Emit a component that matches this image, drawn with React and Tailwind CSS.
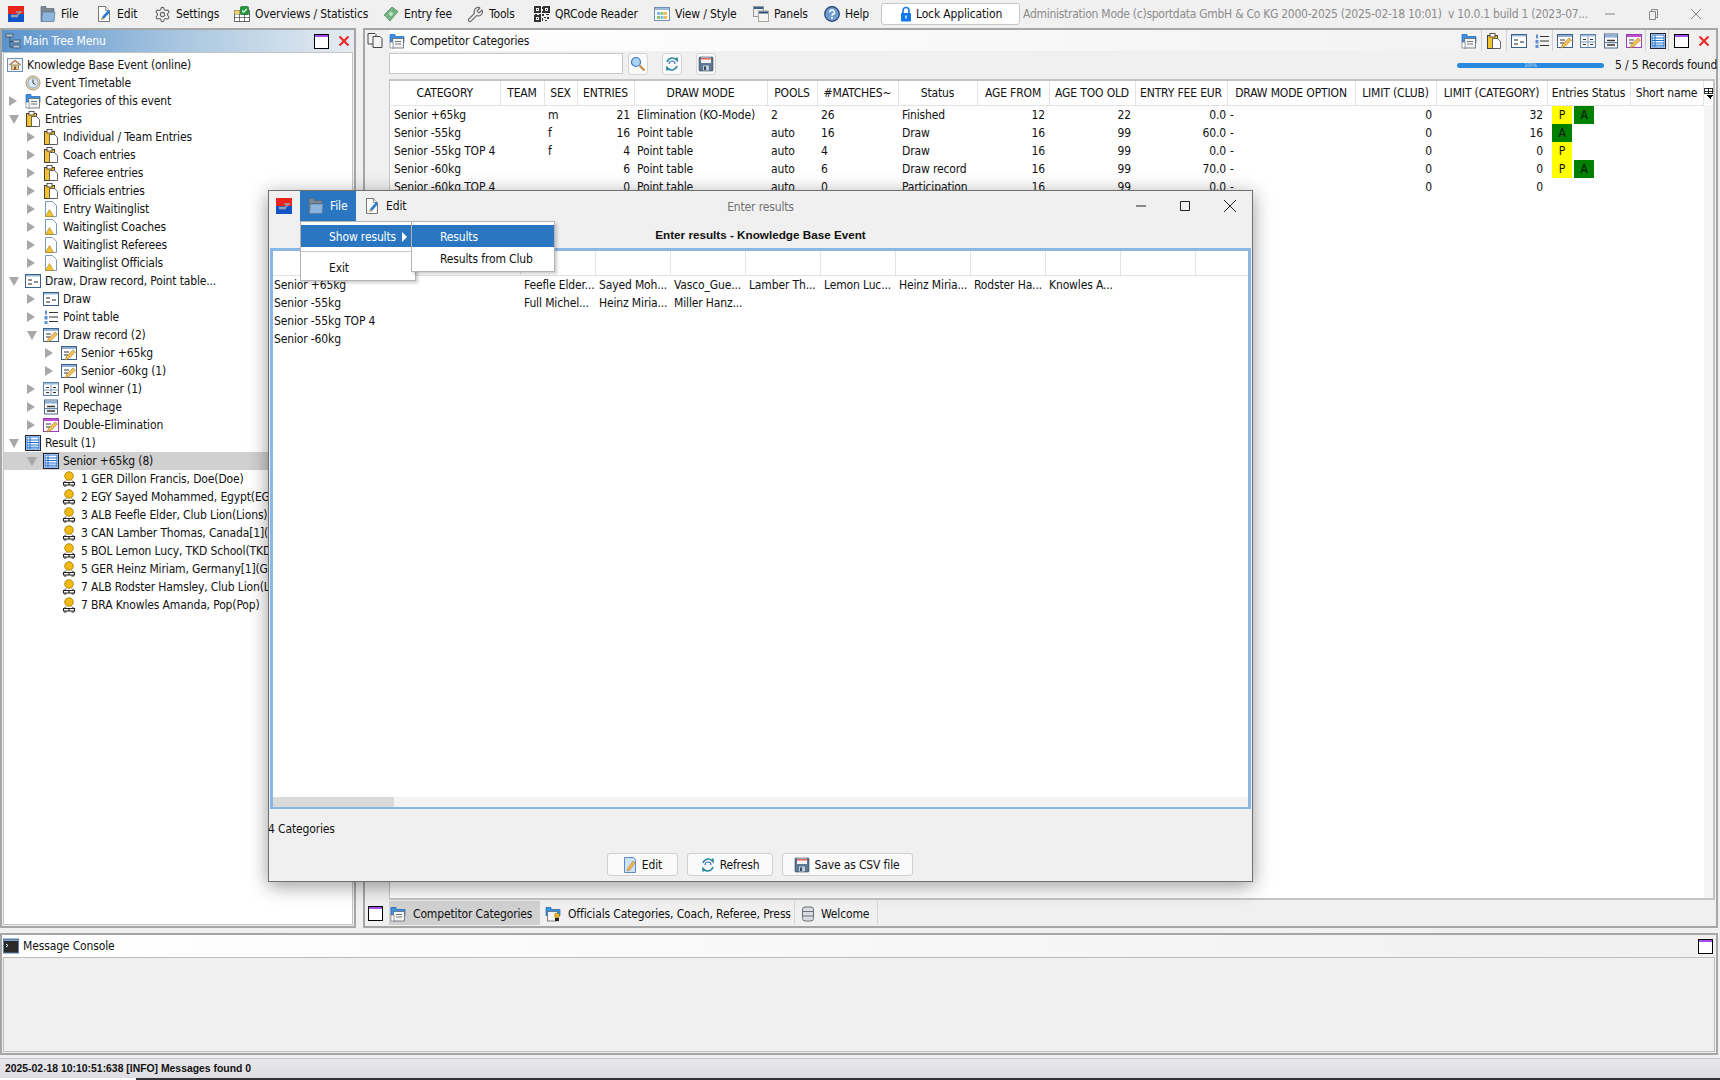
import React from "react";
import { Settings, Wrench } from "lucide-react";

// small 16x16 desktop-style icons
function Ico({ name, className = "w-4 h-4 shrink-0" }) {
    const p = { viewBox: "0 0 16 16", className, xmlns: "http://www.w3.org/2000/svg" };
    switch (name) {
        case "logo":
            return (
                <svg {...p}>
                    <rect width="16" height="8" fill="#e8231c" />
                    <rect y="8" width="16" height="8" fill="#1456c8" />
                    <path d="M3 9.5h6l4-3.5H8M3 10.5h7" stroke="#9aa0a8" strokeWidth="1.4" fill="none" />
                </svg>
            );
        case "folder":
            return (
                <svg {...p}>
                    <path d="M1 .5h5v2h8v3H3v10H1z" fill="#7d8793" stroke="#55606c" strokeWidth=".6" />
                    <path d="M2.500 6H15l-1 9.500H1.500z" fill="#8db4dc" stroke="#5c7894" strokeWidth=".7" />
                </svg>
            );
        case "edit":
            return (
                <svg {...p}>
                    <path d="M2.5 .5h7l4 4v11h-11z" fill="#fff" stroke="#555" strokeWidth=".8" />
                    <path d="M9.5 .5v4h4" fill="#e8e8e8" stroke="#555" strokeWidth=".6" />
                    <path d="M5 14l1-3 6-7 2 2-6 7z" fill="#2f7fd8" />
                    <path d="M5 14l1-3 2 2z" fill="#f3b33d" />
                </svg>
            );
        case "overview":
            return (
                <svg {...p}>
                    <path d="M.5 4.5h15v11H.5z" fill="#fff" stroke="#444" strokeWidth=".8" />
                    <path d="M.5 8h15M.5 11.5h15M5.5 4.5v11M10.5 4.5v11" stroke="#444" strokeWidth=".7" />
                    <rect x=".5" y="4.5" width="5" height="3.5" fill="#f3d35b" />
                    <rect x="6.5" y=".5" width="8" height="8" rx="1" fill="#1f9b3a" stroke="#0d5c20" strokeWidth=".6" />
                    <path d="M8.2 4.5l1.6 1.6 3-3.2" stroke="#fff" strokeWidth="1.2" fill="none" />
                </svg>
            );
        case "money":
            return (
                <svg {...p}>
                    <path d="M1 9l8-8 6 4.5-8 9.5z" fill="#6fb07a" stroke="#4b8a58" strokeWidth=".7" />
                    <circle cx="8" cy="8" r="2" fill="#c8e4cc" />
                    <path d="M2.5 11l7-8M5 13l7.5-8" stroke="#9ccfa6" strokeWidth=".7" />
                </svg>
            );
        case "qr":
            return (
                <svg {...p} shapeRendering="crispEdges">
                    <path d="M1 1h5v5H1zM10 1h5v5h-5zM1 10h5v5H1z" fill="none" stroke="#333" strokeWidth="1.2" />
                    <path d="M3 3h1v1H3zM12 3h1v1h-1zM3 12h1v1H3zM8 1h1v2H8zM7.5 5h1v2h-1zM1 8h2v1H1zM5 8h2v1H5zM8 8h2v2H8zM12 8h3v1h-3zM10 11h2v1h-2zM13 11h2v2h-2zM8 12h1v3H8zM11 14h2v1h-2z" fill="#333" />
                </svg>
            );
        case "view":
            return (
                <svg {...p}>
                    <rect x=".5" y="1.5" width="15" height="13" fill="#fff" stroke="#6d8fb4" />
                    <rect x="1" y="2" width="14" height="2" fill="#9cb9d8" />
                    <rect x="3" y="6" width="3" height="3" fill="#7fb8e8" />
                    <rect x="6.5" y="6" width="3" height="3" fill="#8ac96b" />
                    <rect x="10" y="6" width="3" height="3" fill="#f0bf4f" />
                    <rect x="3" y="10" width="3" height="3" fill="#8ac96b" />
                    <rect x="6.5" y="10" width="3" height="3" fill="#7fb8e8" />
                    <rect x="10" y="10" width="3" height="3" fill="#f0bf4f" />
                </svg>
            );
        case "panels":
            return (
                <svg {...p}>
                    <rect x=".5" y=".5" width="10" height="10" fill="#eee" stroke="#999" />
                    <rect x="1" y="1" width="9" height="2" fill="#3c5f8a" />
                    <rect x="5.5" y="5" width="10" height="10.5" fill="#f4f4f4" stroke="#aaa89a" />
                    <rect x="6" y="5.5" width="9" height="2" fill="#2c4f7a" />
                </svg>
            );
        case "help":
            return (
                <svg {...p}>
                    <circle cx="8" cy="8" r="7.3" fill="#6f9bd0" stroke="#1c3f70" strokeWidth="1.2" />
                    <path d="M5.8 6.2A2.3 2.2 0 1 1 9 8.2c-.7.4-1 .8-1 1.6" fill="none" stroke="#fff" strokeWidth="1.5" />
                    <circle cx="8" cy="12" r="1" fill="#fff" />
                </svg>
            );
        case "lock":
            return (
                <svg {...p}>
                    <path d="M5 7V4.5a3 3 0 0 1 6 0V7" fill="none" stroke="#1f7be8" strokeWidth="1.7" />
                    <rect x="3" y="7" width="10" height="8.5" rx="1" fill="#0f78f0" />
                    <rect x="7.3" y="9.5" width="1.4" height="3" fill="#fff" />
                </svg>
            );
        case "tree":
            return (
                <svg {...p}>
                    <path d="M5 3v11h4M5 8.500h4" fill="none" stroke="#3a4a5c" />
                    <rect x="1" y="1" width="7" height="3" fill="#a8c0d8" stroke="#3a4a5c" strokeWidth=".7" />
                    <rect x="8" y="7" width="7" height="3" fill="#a8c0d8" stroke="#3a4a5c" strokeWidth=".7" />
                    <rect x="8" y="12" width="7" height="3" fill="#a8c0d8" stroke="#3a4a5c" strokeWidth=".7" />
                </svg>
            );
        case "home":
            return (
                <svg {...p}>
                    <rect x=".5" y="1.500" width="15" height="13" fill="#eef3f8" stroke="#6d8fb4" />
                    <path d="M2.500 8L8 3.500 13.500 8" fill="none" stroke="#b0703a" strokeWidth="1.3" />
                    <rect x="4.500" y="8" width="7" height="4.500" fill="#e6c48a" stroke="#7a5a30" strokeWidth=".6" />
                    <rect x="7" y="9.500" width="2" height="3" fill="#7a5a30" />
                </svg>
            );
        case "clock":
            return (
                <svg {...p}>
                    <circle cx="8" cy="8" r="7" fill="#e8d9b8" stroke="#a89670" />
                    <circle cx="8" cy="8" r="5" fill="#dce8f5" stroke="#6d8fb4" strokeWidth=".7" />
                    <path d="M8 4.500V8l2.500 1.500" fill="none" stroke="#333" />
                </svg>
            );
        case "cats":
            return (
                <svg {...p}>
                    <path d="M1 1.500h5v2h9v6H1z" fill="#3a94e8" stroke="#1c5fa8" strokeWidth=".7" />
                    <rect x="3.500" y="5.500" width="11" height="9.500" fill="#f4f4f4" stroke="#5c6670" strokeWidth=".8" />
                    <path d="M6 8.500h6M6 11h6" stroke="#777" />
                    <rect x="1" y="9" width="3" height="6" fill="#fff" stroke="#5c6670" strokeWidth=".6" />
                </svg>
            );
        case "officials":
            return (
                <svg {...p}>
                    <path d="M1 1.500h5v2h9v6H1z" fill="#3a94e8" stroke="#1c5fa8" strokeWidth=".7" />
                    <rect x="2.500" y="5.500" width="10" height="9.500" fill="#f4f4f4" stroke="#5c6670" strokeWidth=".8" />
                    <circle cx="12" cy="9.500" r="2.500" fill="#e8b820" stroke="#7a5a10" strokeWidth=".5" />
                    <rect x="10" y="12" width="4" height="3" fill="#222" />
                </svg>
            );
        case "clip":
            return (
                <svg {...p}>
                    <rect x="1.500" y="2.500" width="10" height="13" fill="#f2c230" stroke="#333" strokeWidth=".9" />
                    <rect x="4" y=".5" width="5" height="3.500" fill="#fff" stroke="#333" strokeWidth=".8" />
                    <path d="M6.500 5.500h5l3 3v7h-8z" fill="#fff" stroke="#444" strokeWidth=".8" />
                </svg>
            );
        case "wait":
            return (
                <svg {...p}>
                    <path d="M2.500 .5h7l4 4v11h-11z" fill="#fff" stroke="#6d8fb4" strokeWidth=".9" />
                    <path d="M2.500 15.500l4-7 4 7z" fill="#f2c230" stroke="#a87f10" strokeWidth=".6" />
                </svg>
            );
        case "draw":
            return (
                <svg {...p}>
                    <rect x=".5" y="1.500" width="15" height="13" fill="#fff" stroke="#3a5f8a" />
                    <rect x="1" y="2" width="14" height="1.500" fill="#9cb9d8" />
                    <path d="M3 7h4M3 11h4M9 9h4" stroke="#222" strokeWidth="1.200" />
                </svg>
            );
        case "point":
            return (
                <svg {...p}>
                    <path d="M6 3.500h9M6 8h9M6 12.500h9" stroke="#333" strokeWidth="1.100" />
                    <path d="M2 1.500h2v4H2zM1.500 7h3v3.500h-3zM1.500 12h3v3h-3z" fill="#5b8fd8" />
                </svg>
            );
        case "record":
        case "double":
            return (
                <svg {...p}>
                    <rect x=".5" y="1.500" width="15" height="13" fill="#fff" stroke={name === "double" ? "#9a3fb0" : "#3a5f8a"} />
                    <rect x="1" y="2" width="14" height="2" fill={name === "double" ? "#c04fd0" : "#8fb0d4"} />
                    <path d="M3 7h5M3 10h4" stroke="#333" />
                    <path d="M4 15l1.500-3.500 6.500-6.500 2.500 2-6.500 6.500z" fill="#f1c25b" stroke="#a8741c" strokeWidth=".6" />
                </svg>
            );
        case "pool":
            return (
                <svg {...p}>
                    <rect x=".5" y="1.500" width="15" height="13" fill="#fff" stroke="#5d82ab" />
                    <rect x="1" y="2" width="14" height="1.500" fill="#9cb9d8" />
                    <path d="M8 3.500v11M1 9h14" stroke="#7d97b4" />
                    <path d="M3 6.500h3M10 6.500h3M3 11.500h3M10 11.500h3" stroke="#333" />
                </svg>
            );
        case "repechage":
            return (
                <svg {...p}>
                    <rect x="1.500" y="1" width="13" height="14" fill="#fff" stroke="#4a6a90" />
                    <rect x="2" y="1.500" width="12" height="3" fill="#8fb0d4" />
                    <path d="M4 7.500h8M4 12h8" stroke="#333" strokeWidth="1.500" />
                    <path d="M2 9.700h12" stroke="#4a6a90" />
                </svg>
            );
        case "result":
            return (
                <svg {...p}>
                    <rect x=".5" y=".5" width="15" height="15" fill="#fff" stroke="#223" />
                    <rect x="2" y="2" width="12" height="12" fill="#fff" stroke="#1f6fd0" />
                    <path d="M2 5h12M2 7.500h12M2 10h12M2 12.200h12" stroke="#1f6fd0" />
                    <path d="M5 2v12" stroke="#1f6fd0" />
                </svg>
            );
        case "medal":
            return (
                <svg {...p}>
                    <circle cx="8" cy="5" r="4.300" fill="#f2b90f" stroke="#a67a08" strokeWidth=".8" />
                    <path d="M2.500 11.500h11v2.500h-11z" fill="#fff" stroke="#222" strokeWidth="1.100" />
                    <path d="M5 9.500l-2 2M11 9.500l2 2" stroke="#222" />
                    <path d="M3 15h2.500M10.500 15H13M8 12v2" stroke="#222" strokeWidth="1.200" />
                </svg>
            );
        case "window":
            return (
                <svg {...p} shapeRendering="crispEdges">
                    <rect x="1" y="1.500" width="14" height="13" fill="#fff" stroke="#000" />
                    <rect x="1.500" y="2" width="13" height="2" fill="#a24fe8" />
                </svg>
            );
        case "redx":
            return (
                <svg {...p}>
                    <path d="M3.500 3.500l9 9M12.500 3.500l-9 9" stroke="#ee2b2b" strokeWidth="2.200" />
                </svg>
            );
        case "copy":
            return (
                <svg {...p}>
                    <path d="M1 1.500h7l1 1v9.500H1z" fill="#f4f4f4" stroke="#333" strokeWidth=".9" />
                    <path d="M6 4.500h7l2 2v9H6z" fill="#f4f4f4" stroke="#333" strokeWidth=".9" />
                </svg>
            );
        case "search":
            return (
                <svg {...p}>
                    <circle cx="6" cy="6" r="4.500" fill="#a8d4f5" stroke="#3f78b8" strokeWidth="1.200" />
                    <path d="M9.500 9.500l5 5" stroke="#c08a3a" strokeWidth="2.200" />
                </svg>
            );
        case "refresh":
            return (
                <svg {...p}>
                    <path d="M3 6a5.500 5.500 0 0 1 9-2.500l1 1V1.500M13 10a5.500 5.500 0 0 1-9 2.500l-1-1v3" fill="none" stroke="#2a8a9a" strokeWidth="1.700" />
                    <path d="M5 8a3 3 0 0 1 6 0" fill="none" stroke="#3a6fc0" strokeWidth="1.200" />
                </svg>
            );
        case "save":
            return (
                <svg {...p}>
                    <rect x="1" y="1" width="14" height="14" rx="1" fill="#5d7894" stroke="#33475c" strokeWidth=".6" />
                    <rect x="3" y="1.500" width="10" height="5.500" fill="#f3f3f3" />
                    <rect x="3" y="2" width="10" height="1.500" fill="#e0625a" />
                    <rect x="5" y="9.500" width="6" height="5" fill="#c4ccd4" />
                    <rect x="6" y="10.500" width="2" height="3.500" fill="#33475c" />
                </svg>
            );
        case "pencil":
            return (
                <svg {...p}>
                    <path d="M2.500 .5h9l2 2v13h-11z" fill="#cfe3f8" stroke="#4a80c0" strokeWidth=".9" />
                    <path d="M5 14l1-3 5-7 2 2-5 7z" fill="#f1b54a" stroke="#a8741c" strokeWidth=".5" />
                </svg>
            );
        case "db":
            return (
                <svg {...p}>
                    <rect x="2.500" y="1" width="11" height="14" rx="2.500" fill="#d8dce0" stroke="#6a7278" />
                    <path d="M2.500 5.500h11M2.500 10h11" stroke="#6a7278" />
                </svg>
            );
        case "console":
            return (
                <svg {...p}>
                    <rect x=".5" y="1" width="15" height="14" fill="#2a2a2a" stroke="#5a7fa8" />
                    <rect x="1" y="1.500" width="14" height="1.500" fill="#7fa5d0" />
                    <path d="M3 6l2 1.500L3 9" fill="none" stroke="#fff" />
                </svg>
            );
        case "tableDrop":
            return (
                <svg {...p} shapeRendering="crispEdges">
                    <rect x="2" y="1.500" width="10" height="7" fill="#fff" stroke="#000" />
                    <path d="M2 5h10M7 1.500v7" stroke="#000" />
                    <path d="M5 10h8l-4 4.500z" fill="#000" />
                </svg>
            );
        default:
            return null;
    }
}

const sans = "[font-family:'DejaVu_Sans_Condensed','Liberation_Sans',sans-serif]";

const treeRows = [
    { level: 0, icon: "home", label: "Knowledge Base Event (online)" },
    { level: 1, icon: "clock", label: "Event Timetable" },
    { level: 1, arrow: "r", icon: "cats", label: "Categories of this event" },
    { level: 1, arrow: "d", icon: "clip", label: "Entries" },
    { level: 2, arrow: "r", icon: "clip", label: "Individual / Team Entries" },
    { level: 2, arrow: "r", icon: "clip", label: "Coach entries" },
    { level: 2, arrow: "r", icon: "clip", label: "Referee entries" },
    { level: 2, arrow: "r", icon: "clip", label: "Officials entries" },
    { level: 2, arrow: "r", icon: "wait", label: "Entry Waitinglist" },
    { level: 2, arrow: "r", icon: "wait", label: "Waitinglist Coaches" },
    { level: 2, arrow: "r", icon: "wait", label: "Waitinglist Referees" },
    { level: 2, arrow: "r", icon: "wait", label: "Waitinglist Officials" },
    { level: 1, arrow: "d", icon: "draw", label: "Draw, Draw record, Point table..." },
    { level: 2, arrow: "r", icon: "draw", label: "Draw" },
    { level: 2, arrow: "r", icon: "point", label: "Point table" },
    { level: 2, arrow: "d", icon: "record", label: "Draw record (2)" },
    { level: 3, arrow: "r", icon: "record", label: "Senior +65kg" },
    { level: 3, arrow: "r", icon: "record", label: "Senior -60kg (1)" },
    { level: 2, arrow: "r", icon: "pool", label: "Pool winner (1)" },
    { level: 2, arrow: "r", icon: "repechage", label: "Repechage" },
    { level: 2, arrow: "r", icon: "double", label: "Double-Elimination" },
    { level: 1, arrow: "d", icon: "result", label: "Result (1)" },
    { level: 2, arrow: "d", icon: "result", label: "Senior +65kg (8)", selected: true },
    { level: 3, icon: "medal", label: "1 GER Dillon Francis, Doe(Doe)" },
    { level: 3, icon: "medal", label: "2 EGY Sayed Mohammed, Egypt(EGY)" },
    { level: 3, icon: "medal", label: "3 ALB Feefle Elder, Club Lion(Lions)" },
    { level: 3, icon: "medal", label: "3 CAN Lamber Thomas, Canada[1](CAN)" },
    { level: 3, icon: "medal", label: "5 BOL Lemon Lucy, TKD School(TKD)" },
    { level: 3, icon: "medal", label: "5 GER Heinz Miriam, Germany[1](GER)" },
    { level: 3, icon: "medal", label: "7 ALB Rodster Hamsley, Club Lion(Lions)" },
    { level: 3, icon: "medal", label: "7 BRA Knowles Amanda, Pop(Pop)" },
];

const levelPad = ["pl-[3px]", "pl-[3px]", "pl-[21px]", "pl-[39px]"];

const columns = [
    { label: "CATEGORY", w: "w-[110px]" },
    { label: "TEAM", w: "w-[44px]" },
    { label: "SEX", w: "w-[33px]" },
    { label: "ENTRIES", w: "w-[57px]", right: true },
    { label: "DRAW MODE", w: "w-[133px]" },
    { label: "POOLS", w: "w-[50px]" },
    { label: "#MATCHES~", w: "w-[81px]" },
    { label: "Status", w: "w-[79px]" },
    { label: "AGE FROM", w: "w-[72px]", right: true },
    { label: "AGE TOO OLD", w: "w-[86px]", right: true },
    { label: "ENTRY FEE EUR", w: "w-[92px]", right: true },
    { label: "DRAW MODE OPTION", w: "w-[128px]" },
    { label: "LIMIT (CLUB)", w: "w-[81px]", right: true },
    { label: "LIMIT (CATEGORY)", w: "w-[111px]", right: true },
    { label: "Entries Status", w: "w-[83px]" },
    { label: "Short name", w: "w-[73px]" },
];

const categories = [
    ["Senior +65kg", "", "m", "21", "Elimination (KO-Mode)", "2", "26", "Finished", "12", "22", "0.0", "-", "0", "32", "PA", ""],
    ["Senior -55kg", "", "f", "16", "Point table", "auto", "16", "Draw", "16", "99", "60.0", "-", "0", "16", "A", ""],
    ["Senior -55kg TOP 4", "", "f", "4", "Point table", "auto", "4", "Draw", "16", "99", "0.0", "-", "0", "0", "P", ""],
    ["Senior -60kg", "", "", "6", "Point table", "auto", "6", "Draw record", "16", "99", "70.0", "-", "0", "0", "PA", ""],
    ["Senior -60kg TOP 4", "", "", "0", "Point table", "auto", "0", "Participation", "16", "99", "0.0", "-", "0", "0", "", ""],
];

const resultRows = [
    { name: "Senior +65kg", cells: ["Feefle Elder...", "Sayed Moh...", "Vasco_Gue...", "Lamber Th...", "Lemon Luc...", "Heinz Miria...", "Rodster Ha...", "Knowles A..."] },
    { name: "Senior -55kg", cells: ["Full Michel...", "Heinz Miria...", "Miller Hanz..."] },
    { name: "Senior -55kg TOP 4", cells: [] },
    { name: "Senior -60kg", cells: [] },
];

// per-column cell padding, the fee and the dash next to it sit close together
function cellPad(i) {
    if (i === 14) return "pl-[5px] pr-0";
    if (i === 10) return "pl-1 pr-[1px]";
    if (i === 11) return "pl-[3px] pr-0";
    if (i === 4) return "pl-[3px] pr-0";
    return "px-1";
}

function Arrow({ dir }) {
    if (dir === "d") {
        return <span className="w-0 h-0 border-l-[5px] border-r-[5px] border-t-[9px] border-l-transparent border-r-transparent border-t-[#a8a8a8]"></span>;
    }
    return <span className="w-0 h-0 border-t-[5px] border-b-[5px] border-l-[8px] border-t-transparent border-b-transparent border-l-[#a8a8a8]"></span>;
}

function StatusChips({ value }) {
    return (
        <div className="flex gap-[2px] h-[18px]">
            {value.split("").map((c) => (
                <span key={c} className={c === "P" ? "w-[20px] h-[18px] bg-[#ffff00] text-center leading-[18px]" : "w-[20px] h-[18px] bg-[#008000] text-center leading-[18px]"}>{c}</span>
            ))}
        </div>
    );
}

function TopBar() {
    return (
        <div className="h-[28px] flex items-center shrink-0 bg-[#f0f0f0] whitespace-nowrap">
            <div className="w-[40px] pl-[8px] shrink-0"><Ico name="logo" /></div>
            <MenuItem icon="folder" label="File" w="w-[56px]" />
            <MenuItem icon="edit" label="Edit" w="w-[58px]" />
            <MenuItem lucide={Settings} label="Settings" w="w-[80px]" />
            <MenuItem icon="overview" label="Overviews / Statistics" w="w-[149px]" />
            <MenuItem icon="money" label="Entry fee" w="w-[84px]" />
            <MenuItem lucide={Wrench} label="Tools" w="w-[67px]" />
            <MenuItem icon="qr" label="QRCode Reader" w="w-[120px]" />
            <MenuItem icon="view" label="View / Style" w="w-[99px]" />
            <MenuItem icon="panels" label="Panels" w="w-[71px]" />
            <MenuItem icon="help" label="Help" w="w-[57px]" />
            <button className="w-[139px] h-[22px] flex items-center pl-[16px] gap-[2px] bg-white border border-[#c8c8c8] rounded-[3px] shrink-0">
                <Ico name="lock" />
                <span>Lock Application</span>
            </button>
            <span className="ml-[3px] w-[572px] tracking-[-0.27px] text-[#8c8c8c] shrink-0">Administration Mode (c)sportdata GmbH &amp; Co KG 2000-2025 (2025-02-18 10:01)&nbsp; v 10.0.1 build 1 (2023-07...</span>
            <div className="flex items-center ml-[9px] gap-[31px]">
                <svg viewBox="0 0 12 12" className="w-3 h-3"><path d="M1 6h10" stroke="#888" /></svg>
                <svg viewBox="0 0 12 12" className="w-3 h-3"><path d="M2.500 3.500h6v8h-6zM4.500 3.500v-2h6v8h-2" fill="none" stroke="#888" /></svg>
                <svg viewBox="0 0 12 12" className="w-3 h-3"><path d="M1 1l10 10M11 1L1 11" stroke="#888" /></svg>
            </div>
        </div>
    );
}

function MenuItem({ icon, lucide: LucideIcon, label, w }) {
    return (
        <div className={`${w} flex items-center gap-[5px] shrink-0`}>
            {LucideIcon ? <LucideIcon className="w-[17px] h-[17px] text-[#666]" strokeWidth={1.6} /> : <Ico name={icon} />}
            <span>{label}</span>
        </div>
    );
}

function TreePanel() {
    return (
        <div className="w-[356px] shrink-0 flex flex-col border-2 border-[#a6a6a6]">
            <div className="h-[22px] shrink-0 flex items-center pl-[3px] gap-[2px] text-white bg-gradient-to-r from-[#5a93cc] via-[#a8c6e0] to-[#e6ecf2]">
                <Ico name="tree" />
                <span className="flex-1">Main Tree Menu</span>
                <Ico name="window" className="w-[17px] h-[17px] shrink-0 mr-[2px]" />
                <Ico name="redx" className="w-4 h-4 mx-[2px] shrink-0" />
            </div>
            <div className="flex-1 mx-[1px] mb-[1px] pt-[3px] bg-white border border-[#c4c4c4] overflow-hidden">
                {treeRows.map((row) => (
                    <div key={row.label + row.level} className={`h-[18px] flex items-center whitespace-nowrap ${levelPad[row.level]} ${row.selected ? "bg-[#d0d0d0]" : ""}`}>
                        {row.level > 0 && (
                            <span className="w-[18px] pl-[2px] flex shrink-0">{row.arrow && <Arrow dir={row.arrow} />}</span>
                        )}
                        <Ico name={row.icon} />
                        <span className="ml-[4px]">{row.label}</span>
                    </div>
                ))}
            </div>
        </div>
    );
}

function ToolGroup({ icons, pad }) {
    return (
        <div className={`flex items-center gap-[7px] h-[21px] border-r border-[#d0d0d0] ${pad}`}>
            {icons.map((name, i) => <Ico key={i} name={name} />)}
        </div>
    );
}

function CategoriesPanel() {
    return (
        <div className="flex-1 flex border-2 border-[#a6a6a6] mr-[2px] ml-[7px] min-w-0">
            {/* left strip */}
            <div className="w-[24px] shrink-0 flex flex-col justify-between items-start pl-[2px] py-[2px]">
                <Ico name="copy" />
                <Ico name="window" className="w-[17px] h-[17px] shrink-0 mb-[2px]" />
            </div>
            <div className="flex-1 flex flex-col min-w-0">
                <div className="h-[21px] shrink-0 flex items-center bg-gradient-to-r from-white to-[#f0f0f0]">
                    <Ico name="cats" />
                    <span className="ml-[5px] flex-1">Competitor Categories</span>
                    <div className="flex items-center">
                        <ToolGroup icons={["cats"]} pad="px-[4px]" />
                        <ToolGroup icons={["clip"]} pad="px-[4px]" />
                        <ToolGroup icons={["draw", "point"]} pad="pl-[4px] pr-[2px]" />
                        <ToolGroup icons={["record", "pool", "repechage", "double"]} pad="pl-[4px] pr-[3px]" />
                        <ToolGroup icons={["result"]} pad="pl-[4px] pr-[2px]" />
                        <div className="flex items-center gap-[7px] pl-[4px] pr-[4px]">
                            <Ico name="window" />
                            <Ico name="redx" />
                        </div>
                    </div>
                </div>
                <div className="h-[28px] shrink-0 flex items-start pt-[2px]">
                    <input className="w-[234px] h-[21px] bg-white border border-[#c8c8c8]" />
                    <button className="ml-[5px] w-[20px] h-[22px] flex items-center justify-center bg-[#fafafa] border border-[#d4d4d4] rounded-[3px]"><Ico name="search" /></button>
                    <button className="ml-[14px] w-[20px] h-[22px] flex items-center justify-center bg-[#fafafa] border border-[#d4d4d4] rounded-[3px]"><Ico name="refresh" /></button>
                    <button className="ml-[14px] w-[20px] h-[22px] flex items-center justify-center bg-[#fafafa] border border-[#d4d4d4] rounded-[3px]"><Ico name="save" /></button>
                    <div className="ml-auto flex items-center">
                        <div className="w-[147px] h-[5px] mt-[1px] rounded-full bg-[#2a8ae0] flex items-center justify-center text-[5px] leading-none text-[#cfe0f0]">100%</div>
                        <span className="ml-[11px] w-[101px] leading-[24px] whitespace-nowrap">5 / 5 Records found</span>
                    </div>
                </div>
                <div className="flex-1 mr-[1px] flex bg-white border-t-2 border-b-2 border-l border-r-2 border-[#c4c4c4] min-h-0 overflow-hidden">
                    <table className="table-fixed w-[1313px] h-fit border-collapse shrink-0">
                        <thead>
                            <tr className="h-[24px] border-b border-[#e4e4e4]">
                                {columns.map((c) => (
                                    <th key={c.label} className={`${c.w} font-normal text-center border-r border-[#e4e4e4] whitespace-nowrap overflow-hidden p-0`}>{c.label}</th>
                                ))}
                            </tr>
                        </thead>
                        <tbody>
                            {categories.map((row) => (
                                <tr key={row[0]} className="h-[18px]">
                                    {row.map((v, i) => (
                                        <td key={i} className={`${columns[i].right ? "text-right" : "text-left"} ${cellPad(i)} py-0 whitespace-nowrap overflow-hidden`}>
                                            {i === 14 ? <StatusChips value={v} /> : v}
                                        </td>
                                    ))}
                                </tr>
                            ))}
                        </tbody>
                    </table>
                    <div className="flex-1 bg-[#f5f5f5] flex flex-col">
                        <div className="h-[24px] bg-white flex items-center"><Ico name="tableDrop" className="w-[13px] h-[13px] -ml-[1px]" /></div>
                    </div>
                </div>
                <div className="h-[24px] mt-[1px] shrink-0 flex items-stretch mb-[1px] whitespace-nowrap">
                    <div className="w-[151px] flex items-center bg-[#d0d0d0] pl-[1px] pt-[2px] gap-[7px]">
                        <Ico name="cats" /><span>Competitor Categories</span>
                    </div>
                    <div className="w-[255px] flex items-center pl-[5px] pt-[2px] gap-[7px] border-r border-[#d8d8d8]">
                        <Ico name="officials" /><span>Officials Categories, Coach, Referee, Press</span>
                    </div>
                    <div className="w-[83px] flex items-center pl-[5px] pt-[2px] gap-[5px] border-r border-[#d8d8d8]">
                        <Ico name="db" /><span>Welcome</span>
                    </div>
                </div>
            </div>
        </div>
    );
}

function ResultsDialog() {
    const headerCols = Array.from({ length: 9 });
    return (
        <div className="absolute left-[268px] top-[190px] w-[985px] h-[692px] flex flex-col bg-[#f0f0f0] border border-[#707070] shadow-[0_4px_18px_rgba(0,0,0,0.4)]">
            <div className="relative h-[30px] shrink-0 flex items-center">
                <Ico name="logo" className="w-4 h-4 ml-[7px] shrink-0" />
                <div className="ml-[8px] w-[56px] h-[30px] bg-[#2a76c0] text-white flex items-center pl-[8px] gap-[6px]">
                    <Ico name="folder" /><span>File</span>
                </div>
                <div className="ml-[8px] flex items-center gap-[6px]">
                    <Ico name="edit" /><span>Edit</span>
                </div>
                <span className="absolute inset-x-0 pt-[2px] text-center text-[#707070]">Enter results</span>
                <div className="ml-auto flex items-center gap-[32px] pr-[15px]">
                    <svg viewBox="0 0 12 12" className="w-3 h-3"><path d="M1 6h10" stroke="#222" /></svg>
                    <svg viewBox="0 0 12 12" className="w-3 h-3"><path d="M1.500 1.500h9v9h-9z" fill="none" stroke="#222" /></svg>
                    <svg viewBox="0 0 14 14" className="w-[14px] h-[14px]"><path d="M1 1l12 12M13 1L1 13" stroke="#222" /></svg>
                </div>
            </div>
            <div className="h-[27px] shrink-0 flex items-center justify-center pt-[1px] font-bold text-[11.7px] tracking-normal [font-family:'Liberation_Sans',sans-serif]">Enter results - Knowledge Base Event</div>
            <div className="h-[561px] mx-[1px] shrink-0 flex flex-col bg-white border-[3px] border-b-2 border-[#8ab8e6]">
                <div className="h-[25px] shrink-0 flex border-b border-[#e4e4e4]">
                    <div className="w-[248px] border-r border-[#e4e4e4]"></div>
                    {headerCols.map((_, i) => <div key={i} className="w-[75px] shrink-0 border-r border-[#e4e4e4]"></div>)}
                </div>
                <div className="flex-1 whitespace-nowrap">
                    {resultRows.map((r) => (
                        <div key={r.name} className="h-[18px] flex items-center">
                            <div className="w-[248px] shrink-0 pl-[1px]">{r.name}</div>
                            {r.cells.map((c) => <div key={c} className="w-[75px] shrink-0 pl-[3px]">{c}</div>)}
                        </div>
                    ))}
                </div>
                <div className="h-[10px] shrink-0 bg-[#f3f3f3]">
                    <div className="w-[121px] h-[10px] bg-[#dadada]"></div>
                </div>
            </div>
            <div className="h-[21px] mt-[9px] shrink-0 flex items-center -ml-[1px]">4 Categories</div>
            <div className="flex justify-center gap-[9px] mt-[14px] pr-[2px]">
                <button className="w-[71px] h-[23px] flex items-center justify-center gap-[4px] bg-[#fafafa] border border-[#cfcfcf] rounded-[3px]"><Ico name="pencil" />Edit</button>
                <button className="w-[86px] h-[23px] flex items-center justify-center gap-[4px] bg-[#fafafa] border border-[#cfcfcf] rounded-[3px]"><Ico name="refresh" />Refresh</button>
                <button className="w-[131px] h-[23px] flex items-center justify-center gap-[4px] bg-[#fafafa] border border-[#cfcfcf] rounded-[3px]"><Ico name="save" />Save as CSV file</button>
            </div>

            {/* opened File menu */}
            <div className="absolute left-[31px] top-[30px] w-[116px] h-[60px] bg-white border border-[#b4b4b4] shadow-[2px_2px_3px_rgba(0,0,0,0.2)] pt-[3px]">
                <div className="h-[22px] w-[110px] bg-[#2a76c0] text-white flex items-center pl-[28px] pt-[2px] relative">
                    Show results
                    <span className="absolute right-[4px] w-0 h-0 border-t-[5px] border-b-[5px] border-l-[5px] border-t-transparent border-b-transparent border-l-white"></span>
                </div>
                <div className="h-px bg-[#c8c8c8] mt-[4px]"></div>
                <div className="h-[24px] flex items-center pl-[28px] mt-[4px]">Exit</div>
            </div>
            <div className="absolute left-[142px] top-[30px] w-[144px] h-[51px] bg-white border border-[#b4b4b4] shadow-[2px_2px_3px_rgba(0,0,0,0.2)] pt-[3px]">
                <div className="h-[22px] bg-[#2a76c0] text-white flex items-center pl-[28px] pt-[2px]">Results</div>
                <div className="h-[22px] flex items-center pl-[28px] pt-[2px]">Results from Club</div>
            </div>
        </div>
    );
}

export default function App() {
    return (
        <div className={`${sans} relative w-[1720px] h-[1080px] overflow-hidden flex flex-col bg-[#f0f0f0] text-[12px] tracking-[-0.14px] text-[#111]`}>
            <TopBar />
            <div className="h-[900px] shrink-0 flex">
                <TreePanel />
                <CategoriesPanel />
            </div>
            <div className="h-[122px] mt-[5px] mr-[2px] shrink-0 flex flex-col border-2 border-[#a6a6a6]">
                <div className="h-[22px] shrink-0 flex items-center pl-[1px] gap-[4px] bg-gradient-to-r from-white to-[#f0f0f0]">
                    <Ico name="console" />
                    <span className="flex-1">Message Console</span>
                    <Ico name="window" className="w-[17px] h-[17px] shrink-0 mr-[2px]" />
                </div>
                <div className="flex-1 mx-[1px] mb-[1px] bg-[#f0f0f0] border border-[#bdbdbd]"></div>
            </div>
            <div className="h-[20px] mt-[3px] shrink-0 flex items-center pl-[5px] font-bold text-[10.4px] tracking-normal [font-family:'Liberation_Sans',sans-serif] bg-gradient-to-b from-[#e8e8ec] to-[#dcdce2] border-t border-[#c8c8c8]">
                2025-02-18 10:10:51:638 [INFO] Messages found 0
            </div>
            <div className="h-[2px] shrink-0 flex">
                <div className="w-[136px] bg-white"></div>
                <div className="flex-1 bg-[#333]"></div>
            </div>
            <ResultsDialog />
        </div>
    );
}
